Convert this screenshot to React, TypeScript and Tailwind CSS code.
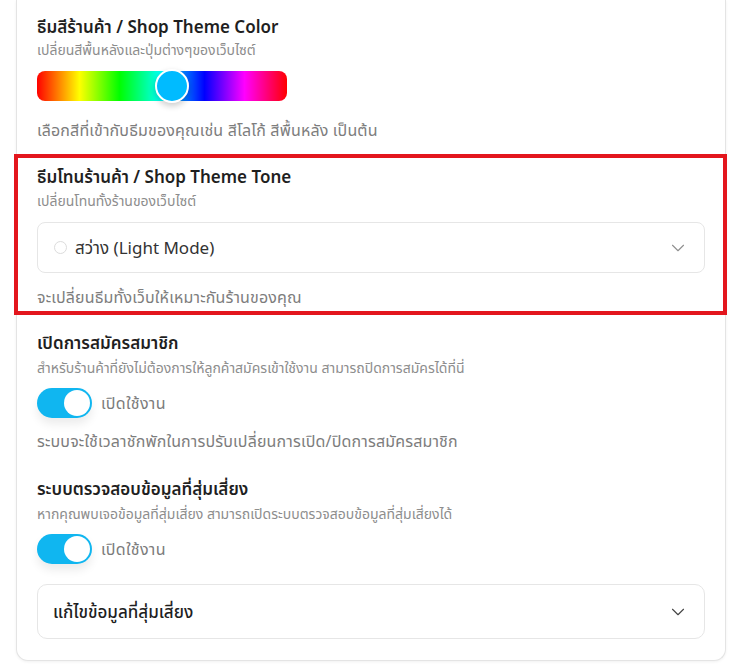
import { ChevronDown } from 'lucide-react'

const thai = "font-['Noto_Sans','Noto_Sans_Thai','DejaVu_Sans',sans-serif]"

function Toggle() {
  return (
    <div className="mt-[10px] flex items-center gap-[9px]">
      <div className="flex h-[30px] w-[55px] items-center justify-end rounded-full bg-[#10b6f0] p-[2px] shadow-[0_6px_10px_rgba(0,0,0,0.08)]">
        <div className="h-[26px] w-[26px] rounded-full bg-white" />
      </div>
      <span className="text-base leading-6 tracking-[0.02em] text-[#7b7b7b]">เปิดใช้งาน</span>
    </div>
  )
}

export default function App() {
  return (
    <div className={`min-h-screen bg-white px-4 ${thai}`}>
      <div className="w-[710px] rounded-b-xl border-x border-b border-[#e4e4e4] bg-white px-5 pb-[21px] pt-[15px] shadow-[0_1px_3px_rgba(0,0,0,0.06)]">
        {/* Shop theme color */}
        <section>
          <h3 className="text-[17px] font-semibold leading-6 text-[#1f1f1f]">ธีมสีร้านค้า / Shop Theme Color</h3>
          <p className="mt-[1px] text-sm leading-5 text-[#8d8d8d]">เปลี่ยนสีพื้นหลังและปุ่มต่างๆของเว็บไซต์</p>
          <div className="relative mt-[11px] h-[30px] w-[250px] rounded-lg bg-[linear-gradient(to_right,#ff0000,#ffff00_17%,#00ff00_33%,#00ffff_50%,#0000ff_67%,#ff00ff_83%,#ff0000)]">
            <div className="absolute left-[118px] top-[-2px] h-[34px] w-[34px] rounded-full border-2 border-white bg-[#00bbff] shadow-[0_3px_6px_rgba(0,0,0,0.2)]" />
          </div>
          <p className="mt-[17px] text-base leading-6 tracking-[0.01em] text-[#7d7d7d]">เลือกสีที่เข้ากับธีมของคุณเช่น สีโลโก้ สีพื้นหลัง เป็นต้น</p>
        </section>

        {/* Shop theme tone, highlighted */}
        <section className="relative mt-[23px]">
          <div className="pointer-events-none absolute -left-[23px] -right-[22px] -top-[11px] -bottom-[6px] border-4 border-[#e3161d]" />
          <h3 className="text-[17px] font-semibold leading-6 text-[#1f1f1f]">ธีมโทนร้านค้า / Shop Theme Tone</h3>
          <p className="mt-[2px] text-sm leading-5 text-[#8d8d8d]">เปลี่ยนโทนทั้งร้านของเว็บไซต์</p>
          <button className="mt-[11px] flex h-[51px] w-full items-center rounded-lg border border-[#e6e6e6] bg-white pl-[16px] pr-[15px] text-left">
            <span className="h-[13px] w-[13px] rounded-full border border-[#dcdcdc]" />
            <span className="ml-[8px] flex-1 text-[17px] leading-6 text-[#333]">สว่าง (Light Mode)</span>
            <ChevronDown className="h-[22px] w-[22px] text-[#8f8f8f]" strokeWidth={1.2} />
          </button>
          <p className="mt-[12px] text-base leading-6 tracking-[0.01em] text-[#7d7d7d]">จะเปลี่ยนธีมทั้งเว็บให้เหมาะกันร้านของคุณ</p>
        </section>

        {/* Member signup */}
        <section className="mt-[22px]">
          <h3 className="text-[17px] font-semibold leading-6 text-[#1f1f1f]">เปิดการสมัครสมาชิก</h3>
          <p className="mt-[3px] text-sm leading-5 text-[#8d8d8d]">สำหรับร้านค้าที่ยังไม่ต้องการให้ลูกค้าสมัครเข้าใช้งาน สามารถปิดการสมัครได้ที่นี่</p>
          <Toggle />
          <p className="mt-[11px] text-base leading-6 tracking-[0.01em] text-[#7d7d7d]">ระบบจะใช้เวลาชักพักในการปรับเปลี่ยนการเปิด/ปิดการสมัครสมาชิก</p>
        </section>

        {/* Risky data check */}
        <section className="mt-[24px]">
          <h3 className="text-[17px] font-semibold leading-6 text-[#1f1f1f]">ระบบตรวจสอบข้อมูลที่สุ่มเสี่ยง</h3>
          <p className="mt-[3px] text-sm leading-5 text-[#8d8d8d]">หากคุณพบเจอข้อมูลที่สุ่มเสี่ยง สามารถเปิดระบบตรวจสอบข้อมูลที่สุ่มเสี่ยงได้</p>
          <Toggle />
          <button className="mt-5 flex h-[55px] w-full items-center rounded-[10px] border border-[#e6e6e6] bg-white pl-[15px] pr-[15px] text-left">
            <span className="flex-1 text-[17px] font-medium leading-6 text-[#1f1f1f]">แก้ไขข้อมูลที่สุ่มเสี่ยง</span>
            <ChevronDown className="h-[22px] w-[22px] text-[#444]" strokeWidth={1.2} />
          </button>
        </section>
      </div>
    </div>
  )
}
